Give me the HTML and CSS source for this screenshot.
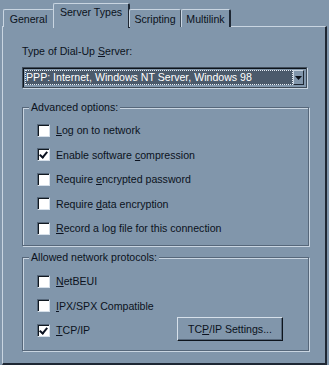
FILE: index.html
```html
<!DOCTYPE html>
<html lang="en">
<head>
    <meta charset="UTF-8">
    <title>Dial-Up Connection Properties</title>
    <link rel="stylesheet" href="styles.css">
</head>
<body>
    <div class="dialog">
        <div class="tabs">
            <div class="tab tab-general">General</div>
            <div class="tab tab-active">Server Types</div>
            <div class="tab tab-scripting">Scripting</div>
            <div class="tab tab-last">Multilink</div>
        </div>

        <div class="panel">
            <div class="field-label">Type of Dial-Up <u>S</u>erver:</div>
            <div class="combo">
                <div class="combo-value"><span>PPP: Internet, Windows NT Server, Windows 98</span></div>
                <div class="combo-btn">
                    <svg width="7" height="4" viewBox="0 0 7 4"><path d="M0 0h7L3.5 4z" fill="#0a0f18"/></svg>
                </div>
            </div>

            <div class="group group-advanced">
                <span class="group-title">Advanced options:</span>
                <div class="check-row"><span class="box"></span><span><u>L</u>og on to network</span></div>
                <div class="check-row"><span class="box checked"></span><span>Enable software <u>c</u>ompression</span></div>
                <div class="check-row"><span class="box"></span><span>Require <u>e</u>ncrypted password</span></div>
                <div class="check-row"><span class="box"></span><span>Require <u>d</u>ata encryption</span></div>
                <div class="check-row"><span class="box"></span><span><u>R</u>ecord a log file for this connection</span></div>
            </div>

            <div class="group group-protocols">
                <span class="group-title">Allowed network protocols:</span>
                <div class="check-row"><span class="box"></span><span><u>N</u>etBEUI</span></div>
                <div class="check-row"><span class="box"></span><span><u>I</u>PX/SPX Compatible</span></div>
                <div class="check-row last-row">
                    <div class="check-left"><span class="box checked"></span><span><u>T</u>CP/IP</span></div>
                    <button class="btn">TC<u>P</u>/IP Settings...</button>
                </div>
            </div>
        </div>
    </div>
</body>
</html>
```

FILE: styles.css
```css
* {
    margin: 0;
    padding: 0;
    box-sizing: border-box;
}

body {
    background: #8196ab;
    font-family: 'Liberation Sans', Arial, sans-serif;
    font-size: 10.6px;
    color: #0b1220;
    width: 329px;
    height: 365px;
    overflow: hidden;
}

u {
    text-decoration: underline;
    text-underline-offset: 1px;
}

.dialog {
    padding: 1px 2px 0 2px;
}

/* Tabs */
.tabs {
    display: flex;
    align-items: flex-end;
    height: 25px;
    padding-left: 1px;
    position: relative;
    z-index: 2;
}

.tab {
    flex: none;
    height: 18px;
    padding-top: 2px;
    text-align: center;
    border-top: 1px solid #c9d5e1;
    border-left: 1px solid #c9d5e1;
    border-right: 1px solid #3f4c5a;
    border-radius: 2px 2px 0 0;
    line-height: 14px;
    margin-bottom: -1px;
    background: #8196ab;
}

.tab-general {
    width: 51px;
}

.tab-active {
    width: 77px;
    height: 25px;
    padding-top: 1px;
    margin-left: -1px;
    margin-right: -1px;
    border-right: 2px solid #1e2733;
    margin-bottom: -2px;
}

.tab-scripting {
    width: 52px;
}

.tab-last {
    width: 50px;
    border-right: 2px solid #1e2733;
}

/* Main panel */
.panel {
    height: 339px;
    width: 325px;
    border-top: 1px solid #c9d5e1;
    border-left: 1px solid #c9d5e1;
    border-right: 2px solid #1e2733;
    border-bottom: 2px solid #1e2733;
    padding: 17px 0 0 19px;
}

.field-label {
    line-height: 14px;
    height: 23px;
}

.combo {
    display: flex;
    width: 285px;
    height: 21px;
    border: 1px solid #3f4c5a;
    box-shadow: inset 1px 1px 0 #0d141c, 1px 1px 0 #c9d5e1;
    background: #8196ab;
    padding: 2px;
}

.combo-value {
    flex: 1;
}

.combo-value span {
    display: block;
    height: 15px;
    width: 268px;
    background: #4b5a6b;
    color: #ffffff;
    line-height: 15px;
    padding-left: 1px;
    outline: 1px dotted #e6edf4;
    outline-offset: -1px;
}

.combo-btn {
    width: 13px;
    height: 15px;
    border-top: 1px solid #c9d5e1;
    border-left: 1px solid #c9d5e1;
    border-right: 1px solid #1e2733;
    border-bottom: 1px solid #1e2733;
    display: flex;
    align-items: center;
    justify-content: center;
}

/* Group boxes */
.group {
    position: relative;
    width: 287px;
    border: 1px solid #56677a;
    box-shadow: inset 1px 1px 0 #c9d5e1, 1px 1px 0 #c9d5e1;
    padding-left: 14px;
}

.group-advanced {
    margin-top: 19px;
    height: 139px;
    padding-top: 10px;
}

.group-protocols {
    margin-top: 11px;
    height: 94px;
    padding-top: 11px;
}

.group-title {
    position: absolute;
    top: -8px;
    left: 6px;
    padding: 0 2px;
    background: #8196ab;
    line-height: 14px;
}

.check-row {
    display: flex;
    align-items: center;
    height: 24.5px;
    gap: 6px;
}

.box {
    width: 13px;
    height: 13px;
    background: #ffffff;
    border-top: 1px solid #56677a;
    border-left: 1px solid #56677a;
    border-right: 1px solid #d6e0ea;
    border-bottom: 1px solid #d6e0ea;
    box-shadow: inset 1px 1px 0 #101820;
    position: relative;
    flex: none;
}

.box.checked::after {
    content: '';
    position: absolute;
    left: 3px;
    top: 1px;
    width: 3px;
    height: 6px;
    border-right: 2px solid #0b1220;
    border-bottom: 2px solid #0b1220;
    transform: rotate(40deg);
}

.last-row {
    gap: 0;
}

.check-left {
    display: flex;
    align-items: center;
    gap: 6px;
    width: 140px;
}

.btn {
    width: 106px;
    height: 24px;
    font-family: inherit;
    font-size: 10.6px;
    color: #0b1220;
    background: #8196ab;
    border-top: 1px solid #d6e0ea;
    border-left: 1px solid #d6e0ea;
    border-right: 1px solid #0d141c;
    border-bottom: 1px solid #0d141c;
    box-shadow: inset -1px -1px 0 #56677a;
    margin-top: -3px;
}
```
